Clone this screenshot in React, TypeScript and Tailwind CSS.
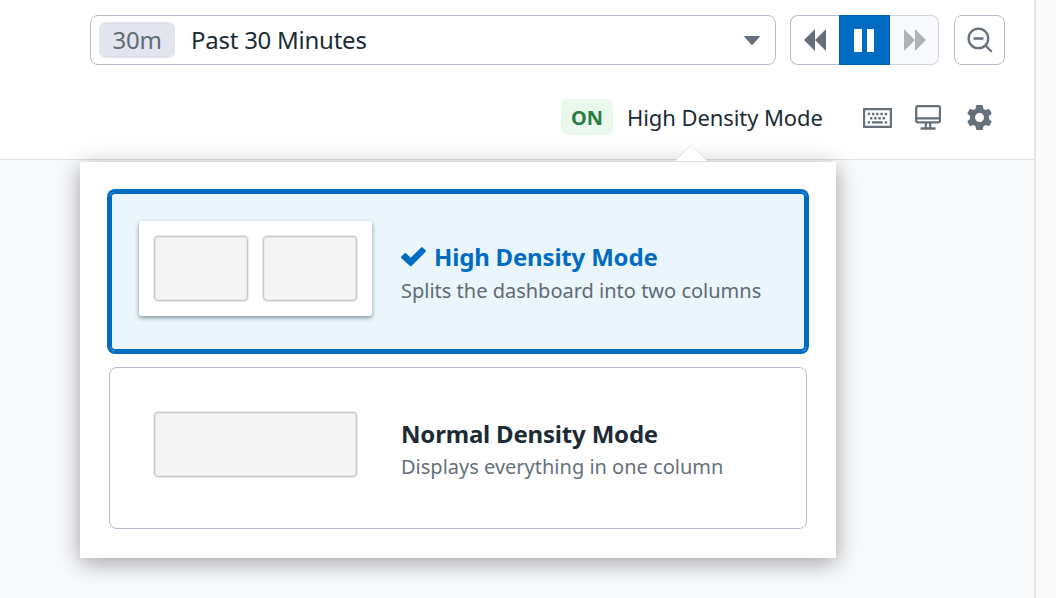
import React from "react";

function Caret() {
  return (
    <svg width="16" height="10" viewBox="0 0 16 10" fill="#66707a" className="mt-[2px]">
      <path d="M0 0.6Q0 0 .6 0H15.4Q16 0 16 .6L8.6 8.7Q8 9.3 7.4 8.7Z" />
    </svg>
  );
}

function DoubleArrow({ flip = false }: { flip?: boolean }) {
  return (
    <svg width="22" height="22" viewBox="0 0 22 22" fill="currentColor" className={flip ? "rotate-180" : ""}>
      <path d="M11 0V22L0 11ZM22 0V22L11 11Z" />
    </svg>
  );
}

function ZoomOut() {
  return (
    <svg width="26" height="26" viewBox="0 0 26 26" fill="none" stroke="#66707a" strokeWidth="2.3">
      <circle cx="11.4" cy="11.4" r="9.8" />
      <path d="M6.5 11.5h10M18.5 18.5l6.2 6.2" />
    </svg>
  );
}

function Keyboard() {
  return (
    <svg width="29" height="20" viewBox="0 0 29 20" fill="#66707a">
      <path fillRule="evenodd" d="M0 0H29V20H0ZM2.2 2.2V17.8H26.8V2.2Z" />
      <path d="M4.7 4.8h2.4v2.4H4.7zM8.9 4.8h2.4v2.4H8.9zM13.2 4.8h2.4v2.4h-2.4zM17.4 4.8h2.4v2.4h-2.4zM21.7 4.8h2.4v2.4h-2.4zM7 9h2.4v2.4H7zM11.2 9h2.4v2.4h-2.4zM15.4 9h2.4v2.4h-2.4zM19.6 9h2.4v2.4h-2.4zM4.7 13.2h2.4v2.4H4.7zM8.9 13.2h11v2.4h-11zM21.7 13.2h2.4v2.4h-2.4z" />
    </svg>
  );
}

function Monitor() {
  return (
    <svg width="26" height="25" viewBox="0 0 26 25" fill="none" stroke="#66707a" strokeWidth="2.3">
      <rect x="1.2" y="1.2" width="23.8" height="16.2" rx="1.8" />
      <path d="M1 13.4h24M10.9 17.5v5.5M15.1 17.5v5.5" />
      <path d="M6.5 23.5h13.2" strokeLinecap="round" />
    </svg>
  );
}

function Gear() {
  return (
    <svg width="25" height="25" viewBox="-12.5 -12.5 25 25" fill="#66707a">
      <path
        fillRule="evenodd"
        d="M-2.6-12.4H2.6Q3.2-12.4 3.4-11.8L3.9-8.8Q5.2-8.2 6.2-7.4L9.1-8.5Q9.7-8.7 10-8.1L12-4.5Q12.2-4 11.8-3.6L9.4-1.6Q9.6 0 9.4 1.6L11.8 3.6Q12.2 4 12 4.5L10 8.1Q9.7 8.7 9.1 8.5L6.2 7.4Q5.2 8.2 3.9 8.8L3.4 11.8Q3.2 12.4 2.6 12.4H-2.6Q-3.2 12.4-3.4 11.8L-3.9 8.8Q-5.2 8.2-6.2 7.4L-9.1 8.5Q-9.7 8.7-10 8.1L-12 4.5Q-12.2 4-11.8 3.6L-9.4 1.6Q-9.6 0-9.4-1.6L-11.8-3.6Q-12.2-4-12-4.5L-10-8.1Q-9.7-8.7-9.1-8.5L-6.2-7.4Q-5.2-8.2-3.9-8.8L-3.4-11.8Q-3.2-12.4-2.6-12.4ZM0-4.5A4.5 4.5 0 1 0 0 4.5A4.5 4.5 0 1 0 0-4.5Z"
      />
    </svg>
  );
}

function Check() {
  return (
    <svg width="25" height="20" viewBox="0 0 25 20" fill="#006bc2">
      <path d="M.3 9.6L3.7 6.2Q4.4 5.6 5.1 6.2L9.7 10.8L20.2.4Q20.9-.2 21.6.4L24.6 3.4Q25.3 4.1 24.6 4.8L10.4 19Q9.7 19.6 9 19L.3 11Q-.3 10.3.3 9.6Z" />
    </svg>
  );
}

function Tile({ className }: { className: string }) {
  return (
    <div
      className={`h-[65px] rounded-[4px] border border-[#c8c8cc] bg-[#f4f4f4] shadow-[0_0_0_1px_rgba(200,200,204,0.4),inset_0_0_0_1px_rgba(200,200,204,0.25)] ${className}`}
    />
  );
}

function DensityPopover() {
  return (
    <div className="absolute left-[80px] top-[162px] flex h-[396px] w-[756px] flex-col bg-white px-[29px] pt-[29px] shadow-[0_5px_22px_rgba(0,0,0,0.36)]">
      <svg className="absolute left-[595px] top-[-18px]" width="32" height="18" viewBox="0 0 32 18">
        <path d="M0 17L16 1L32 17Z" fill="#fff" />
        <path d="M.5 16.5L16 1L31.5 16.5" fill="none" stroke="#e2e3ec" />
      </svg>
      <div className="flex h-[161px] items-start rounded-[6px] border border-[#006bc2] bg-[#eaf5fc] pl-[29px] pt-[29px] shadow-[0_0_0_2px_#006bc2,inset_0_0_0_2px_#006bc2]">
        <div className="flex h-[95px] w-[233px] justify-between rounded-[3px] bg-white px-[15px] pt-[15px] shadow-[0_2px_4px_rgba(30,50,60,0.5)]">
          <Tile className="w-[94px]" />
          <Tile className="w-[94px]" />
        </div>
        <div className="ml-[29px] pt-[20px]">
          <div className="flex h-8 items-center gap-[8px] text-[24px] font-bold tracking-[-0.19px] text-[#006bc2]">
            <Check />
            <span>High Density Mode</span>
          </div>
          <div className="pt-px text-[20px] leading-[34px] text-[#5f6b73]">Splits the dashboard into two columns</div>
        </div>
      </div>
      <div className="mt-[15px] flex h-[162px] items-start rounded-[8px] border border-[#b7bacb] bg-white pl-[44px] pt-[44px]">
        <Tile className="w-[203px]" />
        <div className="ml-[44px] pt-[6px]">
          <div className="text-[24px] font-bold leading-8 tracking-[-0.19px] text-[#1c2b34]">Normal Density Mode</div>
          <div className="text-[20px] leading-[34px] text-[#66707a]">Displays everything in one column</div>
        </div>
      </div>
    </div>
  );
}

export default function App() {
  return (
    <div className="relative flex h-[598px] w-[1056px] overflow-hidden bg-[#fafafa] font-['Noto_Sans',sans-serif]">
      <div className="h-full w-[1036px] border-r-2 border-[#e6e6e6] bg-[#f9fafc]">
        <header className="h-[160px] border-b border-[#e1e3ea] bg-white pt-[15px]">
          <div className="flex h-[50px] pl-[90px] pr-[29px]">
            <div className="flex w-[686px] items-center rounded-[8px] border border-[#b7bacb] pl-[8px] pr-[15px] text-[24px] leading-8 tracking-[-0.25px]">
              <span className="flex h-9 w-[76px] items-center justify-center rounded-[7px] bg-[#e2e4ee] text-[#5f6b75]">30m</span>
              <span className="ml-[16px] text-[#1c2b34]">Past 30 Minutes</span>
              <span className="ml-auto"><Caret /></span>
            </div>
            <div className="ml-[14px] flex w-[149px]">
              <button className="flex w-[49px] items-center justify-center rounded-l-[8px] border border-r-0 border-[#b7bacb] pr-px text-[#66707a]">
                <DoubleArrow />
              </button>
              <button className="flex w-[51px] items-center justify-center gap-[5px] border border-[#0060b8] bg-[#006bc2] pr-px">
                <span className="h-[23px] w-[7.5px] bg-white" />
                <span className="h-[23px] w-[7.5px] bg-white" />
              </button>
              <button className="flex w-[49px] items-center justify-center rounded-r-[8px] border border-l-0 border-[#d0d2de] bg-[#f9fafc] pl-px text-[#aeb3b8]">
                <DoubleArrow flip />
              </button>
            </div>
            <button className="ml-[15px] flex w-[51px] items-center justify-center rounded-[8px] border border-[#b7bacb]">
              <ZoomOut />
            </button>
          </div>
          <div className="mt-[34px] flex h-9 items-center pl-[561px]">
            <span className="flex h-9 w-[52px] items-center justify-center rounded-[7px] bg-[#eaf8ee] pt-px text-[20px] font-bold text-[#2a7e41]">ON</span>
            <span className="ml-[14px] w-[221px] text-[22px] leading-8 tracking-[-0.08px] text-[#1c2b34]">High Density Mode</span>
            <span className="ml-[15px] flex items-center">
              <span className="pt-px"><Keyboard /></span>
              <span className="ml-[23px] pt-px"><Monitor /></span>
              <span className="ml-[26px]"><Gear /></span>
            </span>
          </div>
        </header>
      </div>
      <DensityPopover />
    </div>
  );
}
